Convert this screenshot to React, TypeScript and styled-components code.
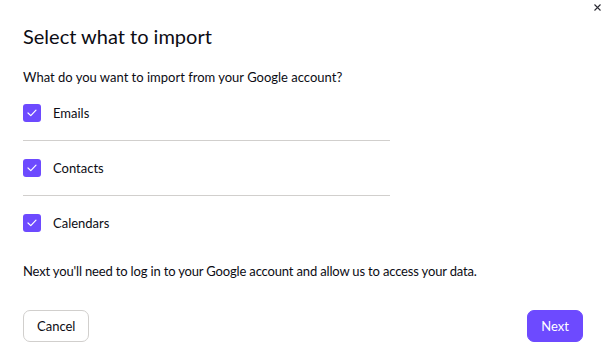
import { createGlobalStyle } from 'styled-components';
import styled from 'styled-components';

const GlobalStyle = createGlobalStyle`
  html, body {
    margin: 0;
    padding: 0;
    background: #ffffff;
  }

  body {
    font-family: Lato, 'Noto Sans', sans-serif;
    color: #0c0c14;
    -webkit-font-smoothing: antialiased;
  }
`;

const Dialog = styled.div`
  position: relative;
  width: 606px;
  height: 349px;
  box-sizing: border-box;
  padding: 24px 23px 0;
  display: flex;
  flex-direction: column;
  background: #ffffff;
`;

const CloseButton = styled.button`
  position: absolute;
  top: 1px;
  right: 3px;
  width: 12px;
  height: 12px;
  padding: 0;
  border: 0;
  background: transparent;
  display: flex;
  align-items: center;
  justify-content: center;
  color: #2a2a33;
  cursor: pointer;
`;

const Title = styled.h1`
  margin: 0;
  font-size: 20px;
  line-height: 24px;
  font-weight: 400;
  color: #0c0c14;
`;

const Text = styled.p<{ $gap: number; $tracking?: number }>`
  margin: ${(p) => p.$gap}px 0 0;
  font-size: 13px;
  line-height: 18px;
  letter-spacing: ${(p) => p.$tracking ?? 0}px;
  color: #0c0c14;
`;

const List = styled.div`
  display: flex;
  flex-direction: column;
  width: 367px;
`;

const Row = styled.label<{ $divider: boolean }>`
  display: flex;
  align-items: center;
  gap: 12px;
  height: 54px;
  border-bottom: ${(p) => (p.$divider ? '1px solid #d1cfcd' : '0')};
  font-size: 13px;
  color: #0c0c14;
  cursor: pointer;
`;

const Box = styled.span`
  width: 18px;
  height: 18px;
  border-radius: 3px;
  background: #6d4aff;
  display: flex;
  align-items: center;
  justify-content: center;
  flex-shrink: 0;
`;

const Footer = styled.div`
  margin-top: 30px;
  display: flex;
  justify-content: space-between;
  align-items: center;
`;

const Button = styled.button<{ $primary?: boolean }>`
  height: 32px;
  padding: 0 13px;
  border-radius: 7px;
  font-family: inherit;
  font-size: 13px;
  border: 1px solid ${(p) => (p.$primary ? '#6d4aff' : '#d1cfcd')};
  background: ${(p) => (p.$primary ? '#6d4aff' : '#ffffff')};
  color: ${(p) => (p.$primary ? '#ffffff' : '#0c0c14')};
  cursor: pointer;
`;

const options = ['Emails', 'Contacts', 'Calendars'];

export default function App() {
  return (
    <>
      <GlobalStyle />
      <Dialog>
        <CloseButton aria-label="Close">
          <svg width="7" height="7" viewBox="0 0 7 7">
            <path
              d="M0.5 0.5 L6.5 6.5 M6.5 0.5 L0.5 6.5"
              stroke="currentColor"
              strokeWidth="1.1"
            />
          </svg>
        </CloseButton>

        <Title>Select what to import</Title>

        <Text $gap={20}>What do you want to import from your Google account?</Text>

        <List>
          {options.map((option, index) => (
            <Row key={option} $divider={index < options.length - 1}>
              <Box>
                <svg width="10" height="8" viewBox="0 0 10 8">
                  <path
                    d="M1 4 L3.8 6.6 L9 1.2"
                    fill="none"
                    stroke="#ffffff"
                    strokeWidth="1.2"
                    strokeLinecap="round"
                    strokeLinejoin="round"
                  />
                </svg>
              </Box>
              {option}
            </Row>
          ))}
        </List>

        <Text $gap={12} $tracking={-0.16}>
          Next you'll need to log in to your Google account and allow us to
          access your data.
        </Text>

        <Footer>
          <Button>Cancel</Button>
          <Button $primary>Next</Button>
        </Footer>
      </Dialog>
    </>
  );
}
